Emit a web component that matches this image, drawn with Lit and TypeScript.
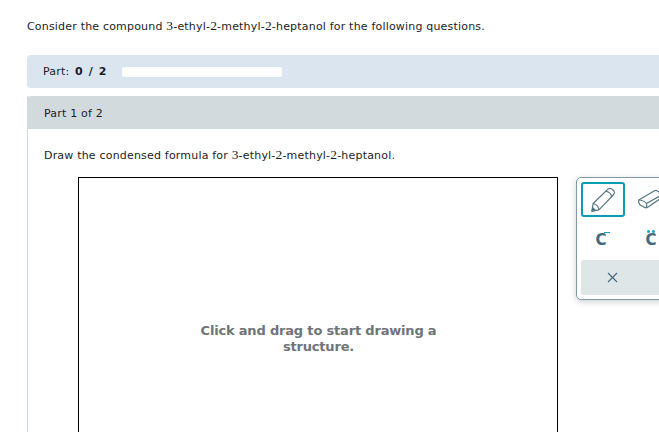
import { LitElement, html, css } from "lit";
import { customElement } from "lit/decorators.js";

@customElement("app-root")
export class AppRoot extends LitElement {
  static styles = css`
    :host {
      display: block;
      width: 659px;
      height: 432px;
      overflow: hidden;
      background: #fff;
      font-family: "DejaVu Sans", Verdana, sans-serif;
      font-size: 11px;
      letter-spacing: 0.19px;
      color: #1c1c28;
    }
    .page {
      width: 760px;
      padding: 19px 0 0 27px;
      box-sizing: border-box;
    }
    .intro {
      margin: 0;
      line-height: 14px;
      height: 36px;
    }
    .num {
      font-family: "Liberation Serif", serif;
      font-size: 13.5px;
      line-height: 14px;
    }
    .progress {
      display: flex;
      align-items: center;
      height: 33px;
      padding-left: 16px;
      gap: 14px;
      background: #dae5ef;
      border-radius: 4px 0 0 4px;
    }
    .progress b {
      margin-left: 2px;
      letter-spacing: 1.1px;
    }
    .track {
      width: 160px;
      height: 10px;
      background: #fff;
      border-radius: 2px;
    }
    .card {
      margin-top: 8px;
      border-left: 1px solid #d2dade;
      height: 400px;
    }
    .card-head {
      display: flex;
      align-items: center;
      height: 33px;
      margin-left: -1px;
      padding: 1px 0 0 17px;
      box-sizing: border-box;
      background: #d2dade;
      border-radius: 4px 0 0 0;
    }
    .body {
      padding: 19px 0 0 16px;
    }
    .prompt {
      margin: 0;
      line-height: 14px;
    }
    .workspace {
      display: flex;
      align-items: flex-start;
      gap: 18px;
      margin: 14px 0 0 34px;
    }
    .canvas {
      box-sizing: border-box;
      width: 480px;
      height: 300px;
      border: 1px solid #000;
      padding-top: 145px;
      flex: none;
      text-align: center;
      font-weight: 700;
      font-size: 13px;
      letter-spacing: -0.18px;
      line-height: 16px;
      color: #6f7479;
    }
    .canvas div {
      width: 270px;
      margin: 0 auto;
      padding-left: 1px;
    }
    .tools {
      box-sizing: border-box;
      flex: none;
      width: 130px;
      height: 123px;
      border: 1px solid #7f9aa3;
      border-radius: 5px;
      padding: 4px;
      box-shadow: 0 2px 6px rgba(60, 80, 90, 0.25);
      display: grid;
      grid-template-columns: 44px 44px;
      grid-template-rows: 35px 43px 35px;
      column-gap: 4px;
    }
    .tool {
      display: flex;
      align-items: center;
      justify-content: center;
      color: #44687a;
      font-weight: 700;
      font-size: 15px;
      letter-spacing: 0;
    }
    .tool.active {
      box-sizing: border-box;
      border: 2px solid #0a9bb5;
      border-radius: 3px;
    }
    .charge {
      position: relative;
      line-height: 1;
      margin: 3px 4px 0 0;
    }
    .dotted {
      margin: 3px 0 0 0;
    }
    .minus {
      position: absolute;
      left: 9px;
      top: -1px;
      width: 6px;
      height: 1px;
      background: #12a5c4;
    }
    .dots {
      position: absolute;
      left: 2px;
      top: -3px;
      width: 3px;
      height: 3px;
      border-radius: 50%;
      background: #12a5c4;
      box-shadow: 5px 0 0 #12a5c4;
    }
    .clear {
      grid-column: 1 / -1;
      background: #dfe6e8;
      border-radius: 3px;
      display: flex;
      align-items: center;
      padding-left: 26px;
      margin-right: -40px;
      box-sizing: border-box;
    }
  `;

  render() {
    const n = (s: string) => html`<span class="num">${s}</span>`;
    return html`
      <div class="page">
        <p class="intro">Consider the compound ${n("3")}-ethyl-${n("2")}-methyl-${n("2")}-heptanol for the following questions.</p>
        <div class="progress">
          <span>Part: <b>0 / 2</b></span>
          <div class="track"></div>
        </div>
        <section class="card">
          <div class="card-head">Part 1 of 2</div>
          <div class="body">
            <p class="prompt">Draw the condensed formula for ${n("3")}-ethyl-${n("2")}-methyl-${n("2")}-heptanol.</p>
            <div class="workspace">
              <div class="canvas"><div>Click and drag to start drawing a structure.</div></div>
              <div class="tools">
                <div class="tool active">
                  <svg width="28" height="28" viewBox="0 0 24 24" fill="none" stroke="#557686" stroke-width="1" stroke-linejoin="round">
                    <path d="M2.5 21.5 L3.5 15 L16.5 2.5 Q18 1.5 19.5 2.5 L21.5 4.5 Q22.5 6 21 7.5 L8.5 20.5 Z" />
                    <path d="M3.5 15 Q8 16 8.5 20.5 M14.5 4.5 Q19 5.5 19.5 9.5" />
                    <path d="M2.5 21.5 L3.2 18.6 L5.4 20.7 Z" fill="#44687a" />
                  </svg>
                </div>
                <div class="tool">
                  <svg width="28" height="24" viewBox="0 0 24 20" fill="none" stroke="#557686" stroke-width="1" stroke-linejoin="round">
                    <path d="M1.5 10 L15 2 Q16 1.5 17 2 L22 5 Q23 6 22 7.5 L9.5 16 Q8 17 6.5 16.5 L2.5 14 Q1 12 1.5 10 Z" />
                    <path d="M1.5 10 Q5.5 10 8 13 Q9 15 7.5 16.8 M8 13 L22.5 5" />
                  </svg>
                </div>
                <div class="tool"><span class="charge">C<span class="minus"></span></span></div>
                <div class="tool"><span class="charge dotted">C<span class="dots"></span></span></div>
                <div class="clear">
                  <svg width="11" height="11" viewBox="0 0 11 11" stroke="#44687a" stroke-width="1.1" fill="none">
                    <path d="M1 1 L10 10 M10 1 L1 10" />
                  </svg>
                </div>
              </div>
            </div>
          </div>
        </section>
      </div>
    `;
  }
}
